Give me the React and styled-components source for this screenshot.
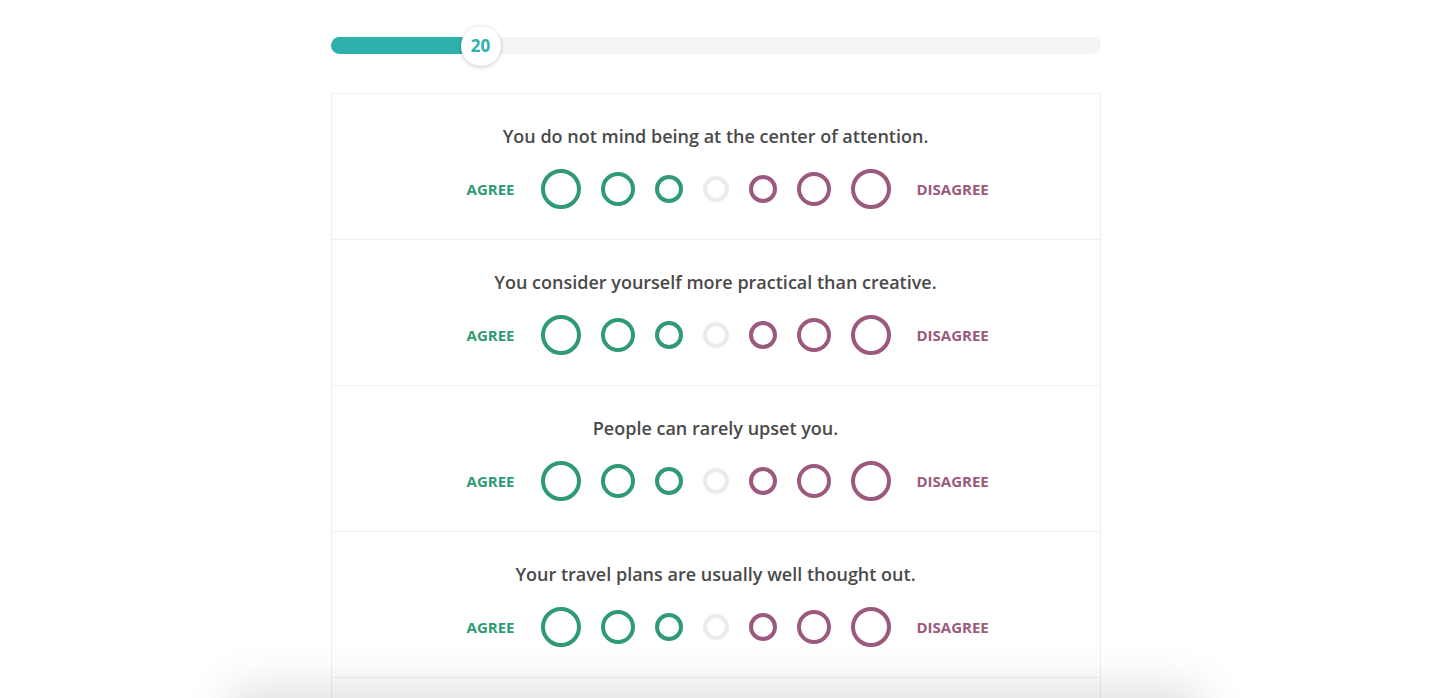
import React, { useState } from 'react'
import styled, { createGlobalStyle } from 'styled-components'

const GlobalStyle = createGlobalStyle`
  html, body {
    margin: 0;
    padding: 0;
    background: #fff;
    font-family: "Open Sans", "Noto Sans", sans-serif;
    overflow: hidden;
  }
`

const Page = styled.div`
  width: 770px;
  margin: 0 auto;
  padding-top: 37px;
`

const Track = styled.div`
  position: relative;
  height: 17px;
  border-radius: 9px;
  background: #f4f4f4;
`

const Fill = styled.div`
  height: 100%;
  border-radius: 9px;
  background: #2eb0ac;
`

const Knob = styled.div`
  position: absolute;
  top: 50%;
  width: 40px;
  height: 40px;
  margin-left: -20px;
  transform: translateY(-50%);
  border-radius: 50%;
  background: #fff;
  box-shadow: 0 1px 4px rgba(0, 0, 0, 0.22);
  display: flex;
  align-items: center;
  justify-content: center;
  color: #2eb0ac;
  font-weight: 700;
  font-size: 17px;
`

const Card = styled.div`
  margin-top: 39px;
  border: 1px solid #f0f0f0;
  background: #fff;
`

const Question = styled.div`
  height: 146px;
  border-bottom: 1px solid #f0f0f0;
  display: flex;
  flex-direction: column;
  align-items: center;
  box-sizing: border-box;
  padding-top: 30px;
`

const Statement = styled.div`
  font-size: 18px;
  font-weight: 600;
  color: #4a4a4a;
  line-height: 24px;
`

const Scale = styled.div`
  margin-top: 20px;
  width: 100%;
  display: grid;
  grid-template-columns: 1fr auto 1fr;
  align-items: center;
  column-gap: 26px;
  height: 42px;
`

const Circles = styled.div`
  display: flex;
  align-items: center;
  gap: 20px;
`

const Label = styled.span`
  font-size: 15px;
  font-weight: 700;
  text-transform: uppercase;
  color: ${p => p.color};
  text-align: ${p => p.align};
`

const Option = styled.button`
  width: ${p => p.size}px;
  height: ${p => p.size}px;
  box-sizing: border-box;
  border-radius: 50%;
  border: 4px solid ${p => p.color};
  background: ${p => (p.active ? p.color : 'transparent')};
  padding: 0;
  cursor: pointer;
  flex-shrink: 0;
`

const Footer = styled.div`
  position: fixed;
  left: 240px;
  right: 240px;
  bottom: -60px;
  height: 60px;
  background: #fff;
  box-shadow: 0 0 45px 10px rgba(0, 0, 0, 0.13);
`

const GREEN = '#2f9a74'
const PURPLE = '#9b5a7d'
const GREY = '#ebebeb'

const options = [
  { size: 40, color: GREEN },
  { size: 34, color: GREEN },
  { size: 28, color: GREEN },
  { size: 26, color: GREY },
  { size: 28, color: PURPLE },
  { size: 34, color: PURPLE },
  { size: 40, color: PURPLE },
]

const questions = [
  'You do not mind being at the center of attention.',
  'You consider yourself more practical than creative.',
  'People can rarely upset you.',
  'Your travel plans are usually well thought out.',
  'You often feel as if you have to justify yourself to other people.',
]

const App = () => {
  const [answers, setAnswers] = useState({})
  const progress = 20

  return (
    <>
      <GlobalStyle />
      <Page>
        <Track>
          <Fill style={{ width: `${(139 / 770) * 100}%` }} />
          <Knob style={{ left: `${(150 / 770) * 100}%` }}>{progress}</Knob>
        </Track>
        <Card>
          {questions.map((q, i) => (
            <Question key={i}>
              <Statement>{q}</Statement>
              <Scale>
                <Label color={GREEN} align="right">Agree</Label>
                <Circles>
                  {options.map((o, j) => (
                    <Option
                      key={j}
                      size={o.size}
                      color={o.color}
                      active={answers[i] === j}
                      onClick={() => setAnswers({ ...answers, [i]: j })}
                    />
                  ))}
                </Circles>
                <Label color={PURPLE} align="left">Disagree</Label>
              </Scale>
            </Question>
          ))}
        </Card>
      </Page>
      <Footer />
    </>
  )
}

export default App
